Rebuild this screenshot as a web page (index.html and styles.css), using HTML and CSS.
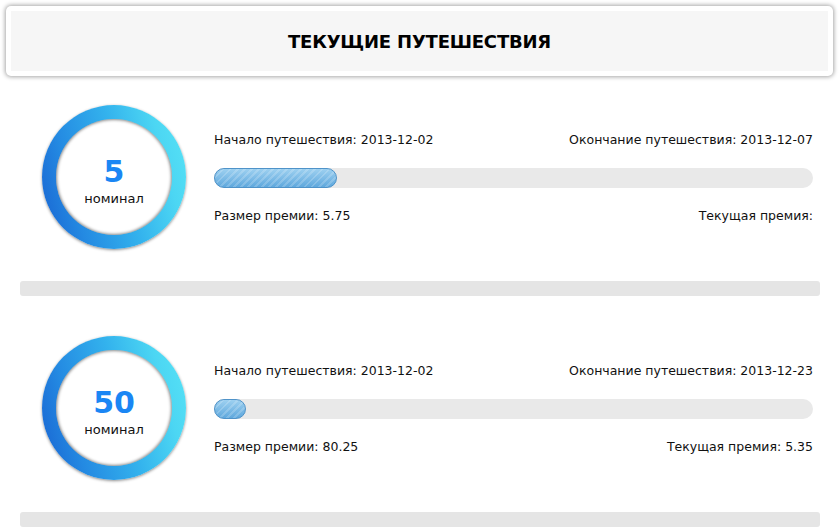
FILE: index.html
```html
<!DOCTYPE html>
<html lang="ru">
<head>
<meta charset="utf-8">
<title>Текущие путешествия</title>
<link rel="stylesheet" href="styles.css">
</head>
<body>
<div class="header">
  <div class="header-inner">
    <h1 class="title">ТЕКУЩИЕ ПУТЕШЕСТВИЯ</h1>
  </div>
</div>
<div class="list">
  <div class="trip">
    <div class="ring">
      <div class="ring-inner">
        <div class="nominal">5</div>
        <div class="nominal-label">номинал</div>
      </div>
    </div>
    <div class="info">
      <div class="row"><span>Начало путешествия: 2013-12-02</span><span>Окончание путешествия: 2013-12-07</span></div>
      <div class="bar"><div class="fill" style="width:121px"></div></div>
      <div class="row"><span>Размер премии: 5.75</span><span>Текущая премия: </span></div>
    </div>
  </div>
  <div class="sep"></div>
  <div class="trip">
    <div class="ring">
      <div class="ring-inner">
        <div class="nominal">50</div>
        <div class="nominal-label">номинал</div>
      </div>
    </div>
    <div class="info">
      <div class="row"><span>Начало путешествия: 2013-12-02</span><span>Окончание путешествия: 2013-12-23</span></div>
      <div class="bar"><div class="fill" style="width:30px"></div></div>
      <div class="row"><span>Размер премии: 80.25</span><span>Текущая премия: 5.35</span></div>
    </div>
  </div>
  <div class="sep"></div>
</div>
</body>
</html>
```
FILE: styles.css
```css
html, body {
  margin: 0;
  padding: 0;
  background: #fff;
  overflow: hidden;
}
body {
  font-family: "DejaVu Sans", Verdana, sans-serif;
  color: #111;
}
.header {
  margin: 6px 6px 0 6px;
  padding: 5px;
  background: #fff;
  border-radius: 5px;
  box-shadow: 0 0 4px 1px rgba(0,0,0,0.35);
}
.header-inner {
  background: #f6f6f6;
  height: 60px;
  display: flex;
  align-items: center;
  justify-content: center;
}
.title {
  margin: 0;
  font-size: 18px;
  font-weight: bold;
  color: #000;
  letter-spacing: -0.2px;
}
.list {
  padding-top: 29px;
}
.trip {
  display: flex;
  align-items: center;
  padding: 0 26px 0 42px;
}
.ring {
  width: 144px;
  height: 144px;
  border-radius: 50%;
  flex: none;
  background: linear-gradient(75deg, #1760d0 0%, #248ae2 25%, #33b2ed 55%, #4cd6f3 80%, #58e4f6 100%);
  box-shadow: 0 1px 3px rgba(0,0,0,0.45);
  display: flex;
  align-items: center;
  justify-content: center;
}
.ring-inner {
  width: 116px;
  height: 116px;
  border-radius: 50%;
  background: #fff;
  box-shadow: inset 0 0 3px 1px rgba(0,0,0,0.45);
  display: flex;
  flex-direction: column;
  align-items: center;
  justify-content: center;
}
.nominal {
  font-size: 30px;
  font-weight: bold;
  color: #1a86f4;
  line-height: 32px;
  margin-top: 8px;
}
.nominal-label {
  font-size: 13px;
  line-height: 16px;
  margin-top: 3px;
  color: #111;
}
.info {
  flex: 1;
  margin-left: 28px;
  margin-top: 2px;
  display: flex;
  flex-direction: column;
  gap: 19px;
}
.row {
  display: flex;
  justify-content: space-between;
  font-size: 12.5px;
  line-height: 18px;
  color: #111;
}
.bar {
  height: 20px;
  border-radius: 10px;
  background: #e9e9e9;
}
.fill {
  height: 18px;
  border: 1px solid #4f93c9;
  border-radius: 10px;
  background:
    repeating-linear-gradient(135deg, rgba(255,255,255,0.18) 0 2px, rgba(255,255,255,0) 2px 5px),
    linear-gradient(#9dd0f0, #5fa8dd);
}
.sep {
  height: 15px;
  margin: 32px 19px 40px 20px;
  border-radius: 3px;
  background: #e5e5e5;
}
```
